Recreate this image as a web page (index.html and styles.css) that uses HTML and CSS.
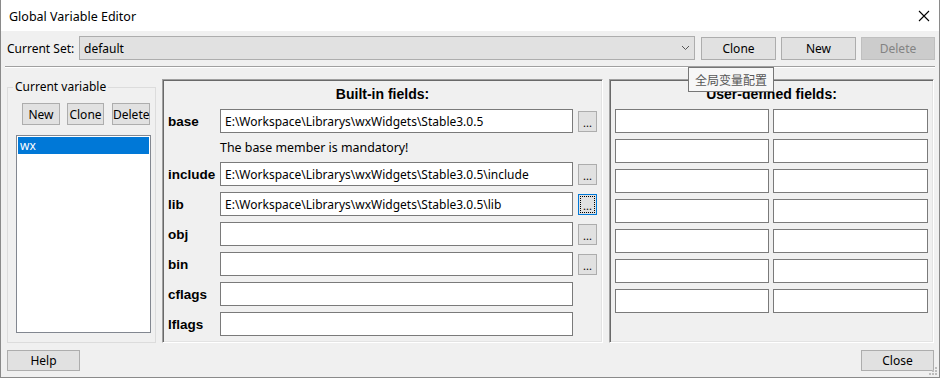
FILE: index.html
```html
<!DOCTYPE html>
<html lang="en">
<head>
    <meta charset="UTF-8">
    <title>Global Variable Editor</title>
    <link rel="stylesheet" href="styles.css">
</head>
<body>
<div class="window">
    <div class="titlebar">
        <span class="title">Global Variable Editor</span>
        <svg class="close-x" width="12" height="12" viewBox="0 0 12 12">
            <path d="M1 1 L11 11 M11 1 L1 11" stroke="#000" stroke-width="1.1" fill="none"/>
        </svg>
    </div>

    <div class="client">
        <div class="set-row">
            <span class="set-label">Current Set:</span>
            <div class="combo">
                <span>default</span>
                <svg width="9" height="6" viewBox="0 0 9 6"><path d="M1 1 L4.5 4.5 L8 1" stroke="#555" fill="none"/></svg>
            </div>
            <button class="btn btn-set">Clone</button>
            <button class="btn btn-set">New</button>
            <button class="btn btn-set" disabled>Delete</button>
        </div>
        <div class="sep"></div>

        <div class="main">
            <fieldset class="group">
                <legend>Current variable</legend>
                <div class="var-buttons">
                    <button class="btn btn-new">New</button>
                    <button class="btn btn-clone">Clone</button>
                    <button class="btn btn-del">Delete</button>
                </div>
                <div class="listbox">
                    <div class="item selected">wx</div>
                </div>
            </fieldset>

            <div class="panel builtin">
                <div class="panel-head">Built-in fields:</div>
                <div class="row">
                    <label>base</label>
                    <input class="field" value="E:\Workspace\Librarys\wxWidgets\Stable3.0.5">
                    <button class="dots">...</button>
                </div>
                <div class="note">The base member is mandatory!</div>
                <div class="row">
                    <label>include</label>
                    <input class="field" value="E:\Workspace\Librarys\wxWidgets\Stable3.0.5\include">
                    <button class="dots">...</button>
                </div>
                <div class="row">
                    <label>lib</label>
                    <input class="field" value="E:\Workspace\Librarys\wxWidgets\Stable3.0.5\lib">
                    <button class="dots focused">...</button>
                </div>
                <div class="row">
                    <label>obj</label>
                    <input class="field" value="">
                    <button class="dots">...</button>
                </div>
                <div class="row">
                    <label>bin</label>
                    <input class="field" value="">
                    <button class="dots">...</button>
                </div>
                <div class="row">
                    <label>cflags</label>
                    <input class="field" value="">
                </div>
                <div class="row">
                    <label>lflags</label>
                    <input class="field" value="">
                </div>
            </div>

            <div class="panel userdef">
                <div class="panel-head">User-defined fields:</div>
                <div class="user-grid">
                    <input class="field"><input class="field">
                    <input class="field"><input class="field">
                    <input class="field"><input class="field">
                    <input class="field"><input class="field">
                    <input class="field"><input class="field">
                    <input class="field"><input class="field">
                    <input class="field"><input class="field">
                </div>
            </div>
        </div>

        <div class="bottom">
            <button class="btn btn-bottom">Help</button>
            <button class="btn btn-bottom">Close</button>
        </div>
    </div>

    <div class="tooltip">全局变量配置</div>
    <svg class="grip" width="8" height="8" viewBox="0 0 8 8">
        <rect x="6" y="0" width="2" height="2" fill="#bcbcbc"/>
        <rect x="3" y="3" width="2" height="2" fill="#bcbcbc"/>
        <rect x="6" y="3" width="2" height="2" fill="#bcbcbc"/>
        <rect x="0" y="6" width="2" height="2" fill="#bcbcbc"/>
        <rect x="3" y="6" width="2" height="2" fill="#bcbcbc"/>
        <rect x="6" y="6" width="2" height="2" fill="#bcbcbc"/>
    </svg>
</div>
</body>
</html>
```

FILE: styles.css
```css
* {
    box-sizing: border-box;
}
body {
    margin: 0;
    font-family: "Noto Sans", "Liberation Sans", sans-serif;
    font-size: 12px;
    color: #000;
}
.window {
    position: relative;
    width: 940px;
    height: 378px;
    border: 1px solid #8a8a8a;
    border-top: none;
    background: #f0f0f0;
}
.titlebar {
    height: 31px;
    background: #fff;
    display: flex;
    align-items: center;
    justify-content: space-between;
    padding: 1px 9px 0 8px;
}
.title {
    font-size: 12.5px;
}
.client {
    padding: 0 4px 0 6px;
}
.set-row {
    display: flex;
    align-items: center;
    height: 24px;
    margin-top: 5px;
}
.set-label {
    width: 72px;
}
.combo {
    flex: 1;
    height: 24px;
    background: #e1e1e1;
    border: 1px solid #adadad;
    display: flex;
    align-items: center;
    justify-content: space-between;
    padding: 0 4px 0 4px;
    margin-right: 6px;
}
.btn {
    font-family: inherit;
    font-size: 12px;
    color: #000;
    background: #e1e1e1;
    border: 1px solid #adadad;
    padding: 0;
    height: 22px;
}
.btn:disabled {
    background: #cccccc;
    border-color: #bfbfbf;
    color: #838383;
}
.btn-set {
    width: 75px;
    height: 23px;
    margin-left: 5px;
}
.btn-set:first-of-type {
    margin-left: 0;
}
.btn-set:last-child {
    width: 74px;
}
.sep {
    margin: 6px 0 0 -2px;
    height: 2px;
    border-top: 1px solid #a0a0a0;
    border-bottom: 1px solid #fff;
}
.main {
    display: flex;
    height: 264px;
    margin-top: 11px;
}
.group {
    width: 149px;
    margin: 0;
    padding: 0;
    border: 1px solid #dcdcdc;
}
.group legend {
    margin-left: 5px;
    padding: 0 2px;
    line-height: 16px;
}
.var-buttons {
    display: flex;
    margin: 8px 0 0 14px;
}
.btn-new { width: 38px; }
.btn-clone { width: 37px; margin-left: 7px; }
.btn-del { width: 38px; margin-left: 8px; }
.listbox {
    width: 135px;
    height: 198px;
    margin: 10px 0 0 8px;
    background: #fff;
    border: 1px solid #828790;
    padding: 1px;
}
.item {
    height: 17px;
    line-height: 17px;
    padding-left: 2px;
}
.selected {
    background: #0078d7;
    color: #fff;
}
.panel {
    margin-left: 6px;
    border-top: 1px solid #a0a0a0;
    border-left: 1px solid #a0a0a0;
    border-right: 1px solid #fff;
    border-bottom: 1px solid #fff;
    box-shadow: inset 1px 1px 0 #696969, inset -1px -1px 0 #e3e3e3;
    padding: 1px;
}
.builtin {
    width: 441px;
}
.userdef {
    width: 325px;
}
.panel-head {
    height: 26px;
    line-height: 26px;
    margin-bottom: 2px;
    text-align: center;
    font-family: "Liberation Sans", Arial, sans-serif;
    font-weight: bold;
    font-size: 14px;
}
.row {
    display: flex;
    align-items: center;
    height: 24px;
    margin-bottom: 6px;
    padding-left: 4px;
}
.row label {
    width: 52px;
    font-family: "Liberation Sans", Arial, sans-serif;
    font-weight: bold;
    font-size: 13.5px;
}
.field {
    font-family: inherit;
    font-size: 12px;
    height: 24px;
    border: 1px solid #7a7a7a;
    background: #fff;
    padding: 0 4px;
    margin: 0;
    outline: none;
}
.row .field {
    width: 353px;
}
.dots {
    width: 19px;
    height: 21px;
    margin-left: 5px;
    padding: 0 0 3px 0;
    font-family: inherit;
    font-size: 11px;
    line-height: 1;
    background: #e1e1e1;
    border: 1px solid #adadad;
    display: flex;
    align-items: flex-end;
    justify-content: center;
}
.focused {
    border-color: #0078d7;
    outline: 1px dotted #000;
    outline-offset: -3px;
}
.note {
    height: 17px;
    line-height: 17px;
    margin: 0 0 6px 56px;
    font-size: 12.4px;
}
.user-grid {
    display: grid;
    grid-template-columns: 154px 155px;
    column-gap: 4px;
    row-gap: 6px;
    padding: 0 4px;
}
.bottom {
    display: flex;
    justify-content: space-between;
    margin-top: 7px;
    padding-right: 1px;
}
.btn-bottom {
    width: 73px;
    height: 21px;
}
.tooltip {
    position: absolute;
    left: 687px;
    top: 67px;
    width: 86px;
    height: 25px;
    line-height: 23px;
    background: #f7f7f7;
    border: 1px solid #767676;
    color: #575757;
    font-family: "Noto Sans CJK SC", sans-serif;
    font-size: 12px;
    text-align: center;
}
.grip {
    position: absolute;
    right: 2px;
    bottom: 2px;
}
```
